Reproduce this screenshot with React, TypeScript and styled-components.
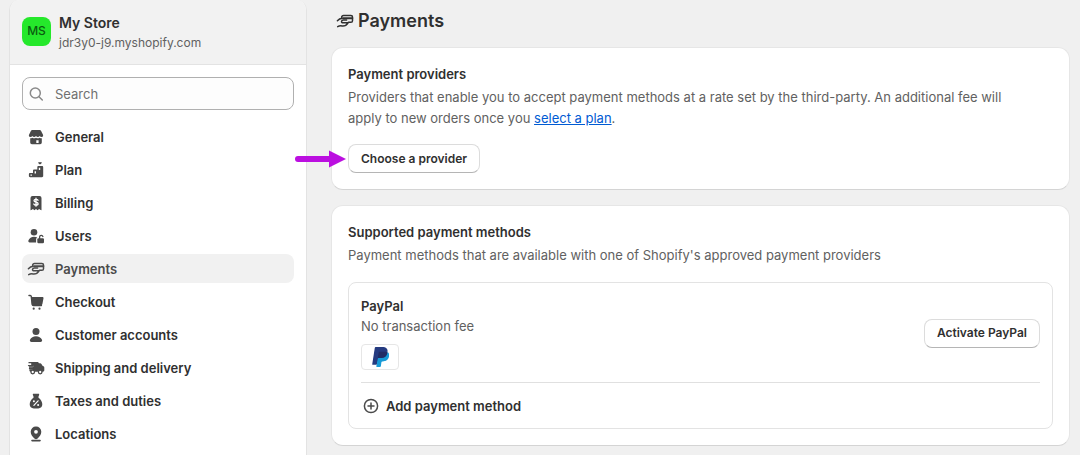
import React from 'react';
import styled, { createGlobalStyle } from 'styled-components';

const GlobalStyle = createGlobalStyle`
  *, *::before, *::after { box-sizing: border-box; }
  body {
    margin: 0;
    background: #f0f0f0;
    color: #303030;
    font-family: Inter, "Liberation Sans", sans-serif;
    font-size: 13px;
    line-height: 20px;
  }
  h1, h2, h3, p, ul { margin: 0; padding: 0; }
  button, input { font: inherit; color: inherit; }
`;

const Page = styled.div`
  display: flex;
  align-items: stretch;
  gap: 24px;
  min-height: 100vh;
  padding: 0 10px 0 9px;
`;

const Sidebar = styled.aside`
  flex: 0 0 298px;
  background: #fff;
  border: 1px solid #e3e3e3;
  border-width: 0 1px;
  border-radius: 10px 10px 0 0;
  overflow: hidden;
`;

const StoreHeader = styled.header`
  display: flex;
  align-items: center;
  gap: 8px;
  height: 65px;
  padding: 2px 12px 0;
  background: #f2f2f2;
  border-bottom: 1px solid #e3e3e3;
`;

const Avatar = styled.span`
  display: grid;
  place-items: center;
  width: 29px;
  height: 29px;
  margin-bottom: 4px;
  border-radius: 8px;
  background: #25e82b;
  color: #0b5c10;
  font-size: 12px;
  font-weight: 500;
`;

const StoreName = styled.p`
  font-size: 14px;
  font-weight: 600;
`;

const Muted = styled.p`
  color: #616161;
`;

const StoreDomain = styled(Muted)`
  font-size: 12px;
`;

const SidebarBody = styled.div`
  padding: 12px;
`;

const Glyph = styled.svg`
  flex: none;
  width: 20px;
  height: 20px;
  color: #4a4a4a;
`;

const SearchBox = styled.label`
  display: flex;
  align-items: center;
  gap: 8px;
  height: 33px;
  padding: 0 4px;
  border: 1px solid #b0b0b0;
  border-radius: 8px;
  background: #fdfdfd;
  ${Glyph} { color: #8a8a8a; }
`;

const SearchInput = styled.input`
  flex: 1;
  min-width: 0;
  padding: 0;
  border: 0;
  outline: 0;
  background: transparent;
  color: #303030;
  &::placeholder { color: #707070; opacity: 1; }
`;

const NavList = styled.ul`
  display: flex;
  flex-direction: column;
  gap: 4px;
  margin-top: 12px;
  list-style: none;
`;

const NavLink = styled.a<{ $active?: boolean }>`
  display: flex;
  align-items: center;
  gap: 9px;
  height: 29px;
  padding: 0 4px;
  border-radius: 8px;
  background: ${(p) => (p.$active ? '#f1f1f1' : 'transparent')};
  color: ${(p) => (p.$active ? '#4a4a4a' : '#303030')};
  font-weight: 600;
  text-decoration: none;
`;

const Main = styled.main`
  flex: 1;
  min-width: 0;
`;

const PageTitle = styled.h1`
  display: flex;
  align-items: center;
  gap: 3px;
  height: 47px;
  padding: 0 4px 6px;
  font-size: 18px;
  font-weight: 600;
  ${Glyph} { color: #303030; }
`;

const Card = styled.section`
  padding: 16px;
  border: 1px solid #e6e6e6;
  border-bottom-color: #d4d4d4;
  border-radius: 12px;
  background: #fff;
  & + & { margin-top: 15px; }
`;

const CardTitle = styled.h2`
  margin-bottom: 3px;
  font-size: 13px;
  font-weight: 600;
`;

const Description = styled(Muted)`
  padding-right: 24px;
  line-height: 21px;
`;

const TextLink = styled.a`
  color: #005bd3;
`;

const ActionSlot = styled.div`
  position: relative;
  width: fit-content;
  margin-top: 15px;
`;

const Button = styled.button`
  height: 29px;
  padding: 0 12px;
  border: 1px solid #dcdcdc;
  border-bottom-color: #b5b5b5;
  border-radius: 8px;
  background: #fff;
  font-size: 12px;
  font-weight: 600;
  white-space: nowrap;
`;

const Pointer = styled.svg`
  position: absolute;
  right: 100%;
  top: 6px;
  margin-right: 2px;
  width: 52px;
  height: 18px;
`;

const MethodBox = styled.div`
  margin-top: 16px;
  padding: 13px 12px 0;
  border: 1px solid #e3e3e3;
  border-radius: 8px;
`;

const MethodRow = styled.div`
  display: flex;
  align-items: center;
  justify-content: space-between;
  padding-bottom: 12px;
  border-bottom: 1px solid #e0e0e0;
`;

const MethodName = styled.h3`
  font-size: 13px;
  font-weight: 600;
`;

const BrandBadge = styled.span`
  display: grid;
  place-items: center;
  width: 38px;
  height: 26px;
  margin-top: 8px;
  border: 1px solid #e6e6e6;
  border-radius: 4px;
`;

const AddButton = styled.button`
  display: flex;
  align-items: center;
  gap: 5px;
  height: 45px;
  padding: 0;
  border: 0;
  background: transparent;
  font-weight: 600;
`;

const icons = {
  store: (
    <g fill="currentColor">
      <path d="M6.300 3h7.400c.6 0 1.100.3 1.300.8l2 3.900c.5 1.300-.3 2.300-1.400 2.300-.9 0-1.500-.4-1.900-1-.9 1.200-2.700 1.200-3.700 0-1 1.200-2.800 1.200-3.700 0-.4.6-1 1-1.900 1-1.100 0-1.900-1-1.400-2.300l2-3.900c.2-.5.7-.8 1.300-.8Z" />
      <path fillRule="evenodd" d="M4.200 11.300c.9 0 1.600-.2 2.200-.6 1.100.7 2.500.7 3.600 0 1.100.7 2.500.7 3.600 0 .6.400 1.300.6 2.200.6v4.200a1.700 1.700 0 0 1-1.700 1.700H5.900a1.700 1.700 0 0 1-1.700-1.700Zm6.100 1.900v2.700h2.300v-2.700Z" />
    </g>
  ),
  plan: (
    <g fill="currentColor">
      <path d="M12.500 2.300c.6-.4 1.200-.2 1.500.3.300-.5.900-.7 1.500-.3.800.7-.6 1.700-1.500 2.300-.9-.6-2.300-1.600-1.500-2.300Z" />
      <path fillRule="evenodd" d="M12.500 6h3.500c.7 0 1.200.5 1.200 1.200v8.800c0 .7-.5 1.200-1.200 1.200H4.100c-.7 0-1.200-.5-1.200-1.200v-1.900c0-.7.5-1.200 1.200-1.200H7v-2.200c0-.7.5-1.200 1.200-1.200h3.100V7.200c0-.7.5-1.200 1.200-1.200Zm-8 8.400v1.400h1.400v-1.400Zm4.100-3.200v2.200H10v-2.200Zm4.200-3.500v2.200h1.400V7.700Z" />
    </g>
  ),
  receipt: (
    <g>
      <path fill="currentColor" d="M6.500 3h7a2 2 0 0 1 2 2v11.700c0 .5-.5.7-.9.4l-1.500-1.200-1.500 1.300-1.600-1.300-1.600 1.300-1.500-1.300-1.500 1.200c-.4.3-.9.1-.9-.4V5a2 2 0 0 1 2-2Z" />
      <path fill="none" stroke="#fff" strokeWidth="1.300" strokeLinecap="round" d="M12 7.300c-.3-.7-1-1-2-1-1.200 0-2 .5-2 1.400 0 2.100 4.100.9 4.100 3.100 0 .9-.9 1.400-2.100 1.400-1.100 0-1.900-.4-2.200-1.200M10 5.200v8" />
    </g>
  ),
  users: (
    <g>
      <g fill="currentColor">
        <circle cx="8" cy="6.300" r="3.300" />
        <path d="M8 10.700c1.300 0 2.400.3 3.300.8-.8.400-1.200 1.100-1.200 2v3H3.700c-1 0-1.700-1-1.300-1.900.9-2.400 3-3.900 5.600-3.900Z" />
        <rect x="11.300" y="12.200" width="6.700" height="5" rx="1.200" />
      </g>
      <path fill="none" stroke="currentColor" strokeWidth="1.300" strokeLinecap="round" d="M13.600 12.500v-1.700a1.700 1.700 0 0 1 3.300-.3" />
    </g>
  ),
  payments: (
    <g fill="none" stroke="currentColor" strokeWidth="1.500" strokeLinecap="round" strokeLinejoin="round">
      <path d="M6.600 6.400c.1-1.200.9-1.900 2-1.900h7.300c1 0 1.600.6 1.600 1.600v3.600c0 1-.6 1.600-1.600 1.600h-2.400" />
      <path strokeWidth="1.900" d="M8 7.200h9.300" />
      <path d="M2.400 9.700c1.400-1.500 2.700-2.300 4.600-2.500M11.600 9.100H8.400C6 9.100 5.900 11.800 8 11.800h5.100c-1.300 2.100-3.300 3.400-6.100 3.100-1.500-.2-2.900-.1-4.300.7" />
    </g>
  ),
  cart: (
    <g>
      <path fill="none" stroke="currentColor" strokeWidth="1.500" strokeLinecap="round" strokeLinejoin="round" d="M3 3.500h1.200c.6 0 1 .4 1.100 1l.9 7.900c.1.700.6 1.100 1.200 1.100h8" />
      <path fill="currentColor" d="M5.200 5h11.300c.7 0 1.200.7 1 1.300l-1.100 5.600c-.2.800-.9 1.300-1.700 1.300H6Z" />
      <circle cx="7.700" cy="16.700" r="1.100" fill="currentColor" />
      <circle cx="13.500" cy="16.700" r="1.100" fill="currentColor" />
    </g>
  ),
  person: (
    <g fill="currentColor">
      <circle cx="10" cy="6.400" r="3.500" />
      <path d="M10 11.200c2.700 0 5 1.300 6 3.600.5 1-.3 2.200-1.500 2.200h-9c-1.200 0-2-1.200-1.500-2.200 1-2.300 3.300-3.600 6-3.600Z" />
    </g>
  ),
  truck: (
    <g>
      <path fill="currentColor" d="M5.200 4h6.200c.8 0 1.400.6 1.500 1.300h1.200c.6 0 1.200.3 1.500.9l.9 1.600 1 .5c.5.300.8.7.8 1.300v2.700c0 .8-.6 1.400-1.400 1.400H4.600c-.7 0-1.200-.5-1.200-1.200v-1.200h3.300V9.800H3V8.300h4.900V6.900H5.200Z" />
      <path fill="none" stroke="currentColor" strokeWidth="1.300" strokeLinecap="round" d="M3 4.700h4.500M2.500 7.600h5M3.500 10.500H7" />
      <circle cx="6.700" cy="14" r="1.800" fill="#fff" stroke="currentColor" strokeWidth="1.300" />
      <circle cx="14.200" cy="14" r="1.800" fill="#fff" stroke="currentColor" strokeWidth="1.300" />
    </g>
  ),
  taxes: (
    <g>
      <path fill="currentColor" d="M7.600 2.700h4.800c.6 0 1 .6.7 1.200l-.6 1.600v1.200c2.300 1.500 3.800 4.200 3.800 6.600 0 2.600-1.500 4.100-4.100 4.100H7.800c-2.600 0-4.100-1.500-4.100-4.100 0-2.400 1.500-5.100 3.800-6.600V5.500l-.6-1.600c-.3-.6.1-1.200.7-1.200Z" />
      <path stroke="#fff" strokeWidth="1.200" strokeLinecap="round" d="m7.900 14.300 4.200-4.500" />
      <circle cx="7.900" cy="10.200" r="1" fill="#fff" />
      <circle cx="12.100" cy="14" r="1" fill="#fff" />
    </g>
  ),
  pin: (
    <g>
      <path fill="currentColor" fillRule="evenodd" d="M10 2.500a5.200 5.200 0 0 1 5.300 5.200c0 3-1.800 4.900-3.700 6.800-.9.900-2.300.9-3.200 0-1.900-1.900-3.700-3.800-3.700-6.800A5.200 5.200 0 0 1 10 2.500Zm0 3.400a1.900 1.900 0 1 0 0 3.800 1.900 1.900 0 0 0 0-3.800Z" />
      <path fill="none" stroke="currentColor" strokeWidth="1.600" strokeLinecap="round" d="M6 16.600h8" />
    </g>
  ),
  search: (
    <g fill="none" stroke="currentColor" strokeWidth="1.500" strokeLinecap="round">
      <circle cx="8.300" cy="9" r="5" />
      <path d="m12 12.700 3.300 3.300" />
    </g>
  ),
  plus: (
    <g fill="none" stroke="currentColor" strokeWidth="1.500" strokeLinecap="round">
      <circle cx="10" cy="10" r="6.600" />
      <path d="M10 7v6M7 10h6" />
    </g>
  ),
};

type IconName = keyof typeof icons;

const Icon = ({ name }: { name: IconName }) => (
  <Glyph viewBox="0 0 20 20" aria-hidden="true">
    {icons[name]}
  </Glyph>
);

const PayPalLogo = () => (
  <svg width="17" height="20" viewBox="0 0 25 30.200" role="img" aria-label="PayPal">
    <path fill="#253b80" d="M7.266 29.154l.523-3.322-1.165-.027H1.061L4.927 1.292a.316.316 0 0 1 .314-.268h9.38c3.114 0 5.263.648 6.385 1.927.526.6.861 1.227 1.023 1.917.17.724.173 1.589.007 2.644l-.012.077v.676l.526.298a3.69 3.69 0 0 1 1.065.812c.45.513.741 1.165.864 1.938.127.795.085 1.741-.123 2.812-.24 1.232-.628 2.305-1.152 3.183a6.547 6.547 0 0 1-1.825 2c-.696.494-1.523.869-2.458 1.109-.906.236-1.939.355-3.072.355h-.73c-.522 0-1.029.188-1.427.525a2.21 2.21 0 0 0-.744 1.328l-.055.299-.924 5.855-.042.215c-.011.068-.03.102-.058.125a.155.155 0 0 1-.096.035H7.266z" />
    <path fill="#179bd7" d="M23.048 7.667c-.028.179-.06.362-.096.55-1.237 6.351-5.469 8.545-10.874 8.545H9.326c-.661 0-1.218.48-1.321 1.132L6.596 26.83l-.399 2.533a.704.704 0 0 0 .695.814h4.881c.578 0 1.069-.42 1.16-.99l.048-.248.919-5.832.059-.32c.09-.572.582-.992 1.16-.992h.73c4.729 0 8.431-1.92 9.513-7.476.452-2.321.218-4.259-.978-5.622a4.667 4.667 0 0 0-1.336-1.03z" />
    <path fill="#222d65" d="M21.754 7.151a9.757 9.757 0 0 0-1.203-.267 15.284 15.284 0 0 0-2.426-.177h-7.352a1.172 1.172 0 0 0-1.159.992L8.05 17.605l-.045.289a1.336 1.336 0 0 1 1.321-1.132h2.752c5.405 0 9.637-2.195 10.874-8.545.037-.188.068-.371.096-.55a6.594 6.594 0 0 0-1.017-.429 9.045 9.045 0 0 0-.277-.087z" />
    <path fill="#253b80" d="M9.614 7.699a1.169 1.169 0 0 1 1.159-.991h7.352c.871 0 1.684.057 2.426.177a9.757 9.757 0 0 1 1.481.353c.365.121.704.264 1.017.429.368-2.347-.003-3.945-1.272-5.392C20.378.682 17.853 0 14.622 0h-9.38c-.66 0-1.223.48-1.325 1.133L.01 25.898a.806.806 0 0 0 .795.932h5.791l1.454-9.225 1.564-9.906z" />
  </svg>
);

const navItems: { label: string; icon: IconName; active?: boolean }[] = [
  { label: 'General', icon: 'store' },
  { label: 'Plan', icon: 'plan' },
  { label: 'Billing', icon: 'receipt' },
  { label: 'Users', icon: 'users' },
  { label: 'Payments', icon: 'payments', active: true },
  { label: 'Checkout', icon: 'cart' },
  { label: 'Customer accounts', icon: 'person' },
  { label: 'Shipping and delivery', icon: 'truck' },
  { label: 'Taxes and duties', icon: 'taxes' },
  { label: 'Locations', icon: 'pin' },
];

export default function App() {
  return (
    <>
      <GlobalStyle />
      <Page>
        <Sidebar>
          <StoreHeader>
            <Avatar>MS</Avatar>
            <div>
              <StoreName>My Store</StoreName>
              <StoreDomain>jdr3y0-j9.myshopify.com</StoreDomain>
            </div>
          </StoreHeader>
          <SidebarBody>
            <SearchBox>
              <Icon name="search" />
              <SearchInput type="search" placeholder="Search" aria-label="Search" />
            </SearchBox>
            <nav aria-label="Settings">
              <NavList>
                {navItems.map((item) => (
                  <li key={item.label}>
                    <NavLink href="#" $active={item.active} aria-current={item.active ? 'page' : undefined}>
                      <Icon name={item.icon} />
                      {item.label}
                    </NavLink>
                  </li>
                ))}
              </NavList>
            </nav>
          </SidebarBody>
        </Sidebar>
        <Main>
          <PageTitle>
            <Icon name="payments" />
            Payments
          </PageTitle>
          <Card>
            <CardTitle>Payment providers</CardTitle>
            <Description>
              Providers that enable you to accept payment methods at a rate set by the third-party. An
              additional fee will apply to new orders once you <TextLink href="#">select a plan</TextLink>.
            </Description>
            <ActionSlot>
              <Button type="button">Choose a provider</Button>
              <Pointer viewBox="0 0 52 18" aria-hidden="true">
                <path d="M4 9h34" stroke="#bb0fe0" strokeWidth="6" strokeLinecap="round" />
                <path d="M35 0.500 52 9 35 17.500Z" fill="#bb0fe0" />
              </Pointer>
            </ActionSlot>
          </Card>
          <Card>
            <CardTitle>Supported payment methods</CardTitle>
            <Description>Payment methods that are available with one of Shopify's approved payment providers</Description>
            <MethodBox>
              <MethodRow>
                <div>
                  <MethodName>PayPal</MethodName>
                  <Muted>No transaction fee</Muted>
                  <BrandBadge>
                    <PayPalLogo />
                  </BrandBadge>
                </div>
                <Button type="button">Activate PayPal</Button>
              </MethodRow>
              <AddButton type="button">
                <Icon name="plus" />
                Add payment method
              </AddButton>
            </MethodBox>
          </Card>
        </Main>
      </Page>
    </>
  );
}
